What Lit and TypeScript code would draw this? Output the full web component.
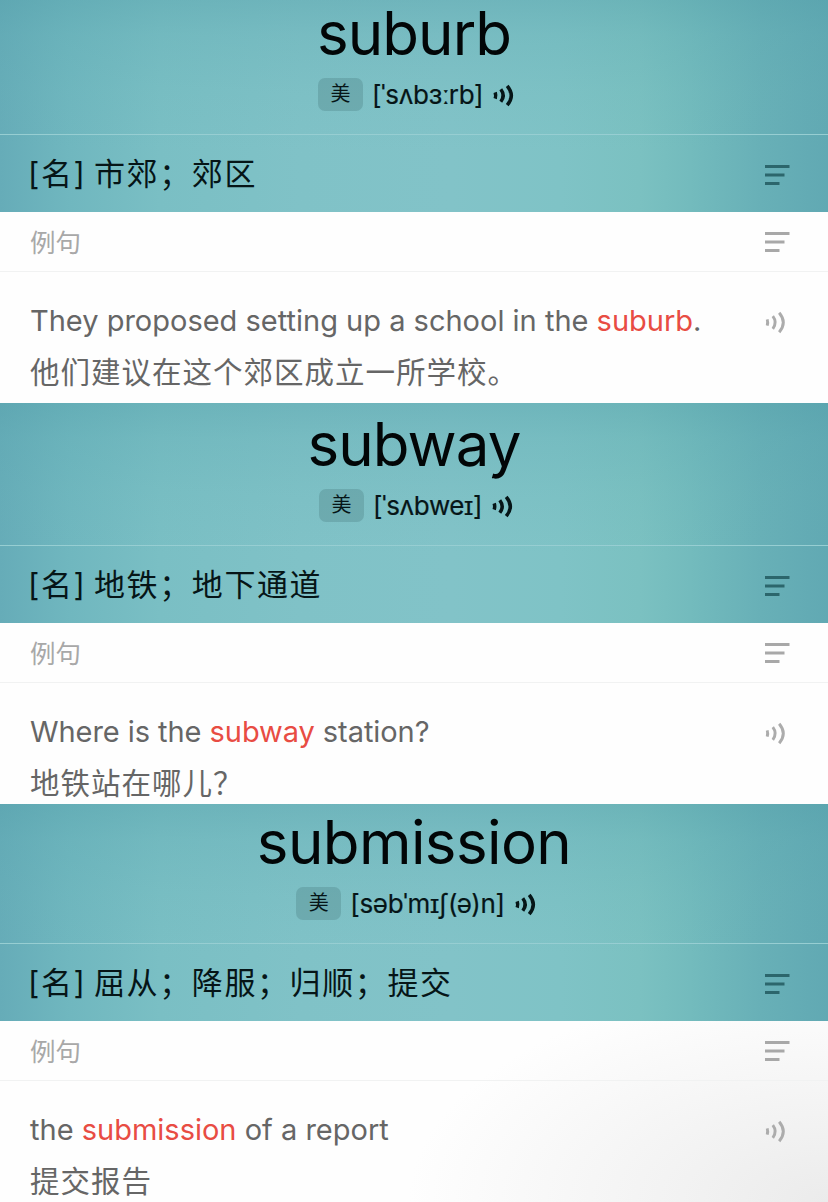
import { LitElement, html, css, svg } from "lit";
import { customElement, property } from "lit/decorators.js";

interface Entry {
  word: string;
  phonetic: string;
  meaning: string;
  before: string;
  after: string;
  translation: string;
  size: string;
}

const entries: Entry[] = [
  { word: "suburb", phonetic: "[ˈsʌbɜːrb]", meaning: "市郊；郊区", before: "They proposed setting up a school in the ", after: ".", translation: "他们建议在这个郊区成立一所学校。", size: "first" },
  { word: "subway", phonetic: "[ˈsʌbweɪ]", meaning: "地铁；地下通道", before: "Where is the ", after: " station?", translation: "地铁站在哪儿？", size: "second" },
  { word: "submission", phonetic: "[səbˈmɪʃ(ə)n]", meaning: "屈从；降服；归顺；提交", before: "the ", after: " of a report", translation: "提交报告", size: "third" },
];

const sound = svg`
  <path d="M2.2 8.4Q3.2 11.5 2.2 14.6" />
  <path d="M7.8 5.2Q12.6 11.5 7.8 17.8" />
  <path d="M14.2 1.8Q22.4 11.5 14.2 21.2" />`;

const menuIcon = html`<svg class="menu" width="26" height="22" viewBox="0 0 26 22">
  <path d="M1 2.5H25.5M1 11H20.5M1 19.5H15.5" fill="none" stroke="currentColor" stroke-width="2.8" />
</svg>`;

@customElement("word-card")
export class WordCard extends LitElement {
  @property({ attribute: false }) entry!: Entry;

  static styles = css`
    :host { display: block; overflow: hidden; }
    .card { display: flex; flex-direction: column; }
    .top {
      background:
        linear-gradient(180deg, rgba(84, 160, 170, 0.4) 0, rgba(92, 168, 176, 0.26) 35px, rgba(100, 175, 180, 0.12) 90px, rgba(100, 175, 180, 0) 150px),
        linear-gradient(90deg, #66acb8 0, #70b7bf 70px, #7abfc4 160px, #80c2c7 300px, #82c3c8 450px, #7fc3c6 560px, #7bc1c1 640px, #73bbbd 690px, #68b0b7 760px, #61a9b3 828px);
    }
    .hero { display: flex; flex-direction: column; justify-content: flex-end; align-items: center; border-bottom: 1px solid #97ced2; box-sizing: border-box; }
    .first .hero { height: 135px; }
    .second .hero { height: 143px; }
    .third .hero { height: 140px; }
    .word { font-size: 60px; line-height: 64px; letter-spacing: -0.9px; color: #020607; white-space: nowrap; margin-bottom: 12px; }
    .third .word { letter-spacing: -0.6px; }
    .say { display: flex; align-items: center; height: 34px; margin: 0 0 23px 5px; color: #061517; }
    .region { width: 45px; height: 33px; margin-right: 9px; border-radius: 7px; background: rgba(62, 112, 116, 0.27); display: flex; align-items: center; justify-content: center; font-size: 20px; line-height: 33px; }
    .ipa { font-size: 26px; line-height: 34px; letter-spacing: -0.35px; white-space: nowrap; margin: 2px 10px 0 0; -webkit-text-stroke: 0.2px #061517; }
    .second .ipa { letter-spacing: -0.4px; }
    .sound { fill: none; stroke: currentColor; stroke-linecap: butt; flex: none; }
    .loud { stroke-width: 3.5; margin-top: 3px; }
    .meaning { display: flex; align-items: center; justify-content: space-between; padding: 0 38px 0 28px; height: 77px; color: #061517; box-sizing: border-box; }
    .sense { display: flex; align-items: center; font-size: 31px; line-height: 40px; letter-spacing: 1.6px; margin-top: 1px; }
    .kind { width: 66px; }
    .meaning .menu { color: #2c666c; margin-top: 3px; }
    .label { display: flex; align-items: center; justify-content: space-between; padding: 0 38px 0 30px; height: 60px; box-sizing: border-box; border-bottom: 1px solid #f1f2f2; color: #a8a8a8; font-size: 25.5px; }
    .label-text { margin-bottom: 3px; }
    .label .menu { margin-top: 1px; }
    .example { display: flex; justify-content: space-between; padding: 30px 41px 0 30px; color: #666; }
    .english { font-size: 29px; line-height: 38px; white-space: nowrap; }
    .second .english { letter-spacing: -0.06px; }
    .chinese { font-size: 29.5px; line-height: 40px; letter-spacing: 1px; margin-top: 12px; white-space: nowrap; }
    .hit { color: #e84c43; }
    .quiet { stroke-width: 2.9; color: #acacac; margin-top: 9px; }
  `;

  render() {
    const e = this.entry;
    return html`<article class="card ${e.size}">
      <div class="top">
        <header class="hero">
          <div class="word">${e.word}</div>
          <div class="say">
            <span class="region">美</span>
            <span class="ipa">${e.phonetic}</span>
            <svg class="sound loud" width="22" height="23" viewBox="0 0 22 23">${sound}</svg>
          </div>
        </header>
        <div class="meaning">
          <div class="sense"><span class="kind">[名]</span><span class="text">${e.meaning}</span></div>
          ${menuIcon}
        </div>
      </div>
      <div class="label"><span class="label-text">例句</span>${menuIcon}</div>
      <div class="example">
        <div>
          <div class="english">${e.before}<span class="hit">${e.word}</span>${e.after}</div>
          <div class="chinese">${e.translation}</div>
        </div>
        <svg class="sound quiet" width="22" height="23" viewBox="0 0 22 23">${sound}</svg>
      </div>
    </article>`;
  }
}

@customElement("app-root")
export class AppRoot extends LitElement {
  static styles = css`
    :host { display: block; width: 828px; height: 1202px; overflow: hidden; background: #fefefe; font-family: Inter, "Noto Sans CJK SC", sans-serif; }
    .list { display: grid; grid-template-rows: 403px 401px 398px; }
    .shade { background: radial-gradient(ellipse 420px 220px at 100% 100%, #ebebeb 0, #f2f2f2 35%, #fefefe 100%); }
  `;

  render() {
    return html`<main class="list">
      ${entries.map((e) => html`<word-card class=${e.size === "third" ? "shade" : ""} .entry=${e}></word-card>`)}
    </main>`;
  }
}
